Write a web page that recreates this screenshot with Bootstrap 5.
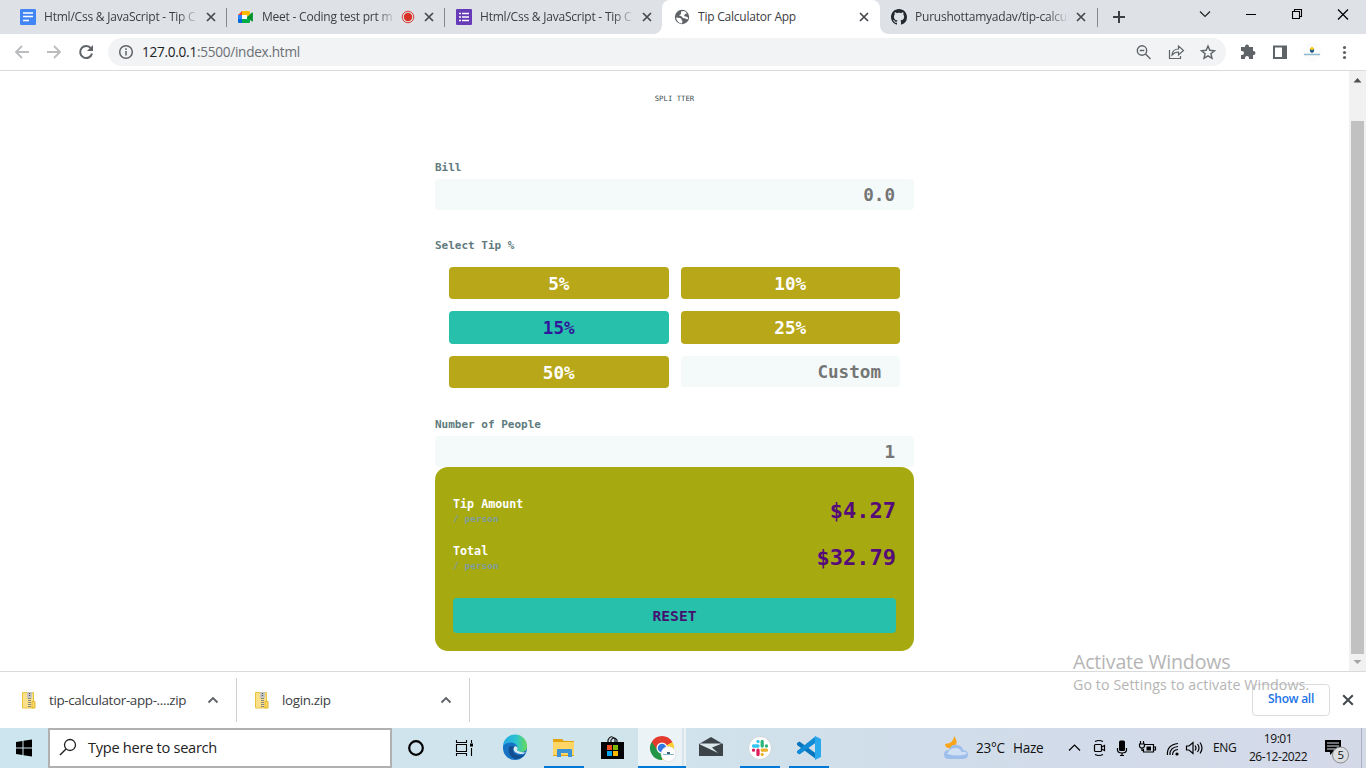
<!DOCTYPE html>
<html lang="en">
<head>
<meta charset="utf-8">
<title>Tip Calculator App</title>
<link href="https://cdn.jsdelivr.net/npm/bootstrap@5.3.0/dist/css/bootstrap.min.css" rel="stylesheet">
<style>
body{width:1366px;height:768px;overflow:hidden;font-family:"Open Sans","Noto Sans",sans-serif;font-size:12px;color:#3c4043;background:#fff}
svg{display:block;flex:none}
.tabstrip{height:34px;background:#dee1e6;padding-left:8px}
.tab{width:218px;height:34px;padding-left:12px;position:relative}
.tab .ttl{width:155px;margin-left:8px;overflow:hidden;white-space:nowrap;letter-spacing:-.22px;line-height:20px}
.tab .fade-end{-webkit-mask-image:linear-gradient(90deg,#000 86%,transparent);mask-image:linear-gradient(90deg,#000 86%,transparent)}
.tab .cls{margin-left:7px}
.tab.sep::after{content:"";position:absolute;right:-1px;top:8px;height:19px;width:1px;background:#85888c}
.tab.on{background:#fff;border-radius:8px 8px 0 0}
.tab.on .cls{margin-left:6px}
.tab.on::before,.tab.on::after{content:"";position:absolute;bottom:0;width:8px;height:8px}
.tab.on::before{left:-8px;background:radial-gradient(circle at 0 0,transparent 7.5px,#fff 8px)}
.tab.on::after{right:-8px;background:radial-gradient(circle at 100% 0,transparent 7.5px,#fff 8px)}
.toolbar{height:37px;border-bottom:1px solid #d9dadb;padding-left:12px}
.omni{width:1118px;height:28px;border-radius:14px;background:#f1f3f4;padding:0 8px 0 10px;margin-left:14px}
.url{font-size:13.6px;letter-spacing:-.27px;color:#6b6f74;margin-left:8px}
.url b{font-weight:400;color:#202124}
.viewport{height:600px}
.sbar{width:17px;background:#f1f1f1}
.thumb{width:13px;height:533px;background:#c1c1c1}
.calc{width:479px;font-family:"DejaVu Sans Mono",monospace;font-weight:700}
.logo{font-size:7.3px;font-weight:400;line-height:10px;padding-top:23px;color:#3a4a50}
.lbl{font-size:11px;line-height:16px;color:#5e7a7d}
.inp{height:31px;border-radius:4px;background:#f4fafa;color:#757575;font-size:17.6px;line-height:32px;text-align:right;padding-right:19px}
.tips{display:grid;grid-template-columns:1fr 1fr;gap:12px;padding:0 14px}
.tipb{height:32.5px;border:0;border-radius:4px;background:#b8a718;color:#fff;font-size:17.6px;line-height:34px;text-align:center;padding:0;font-weight:700}
.tipb.sel{background:#26c0ab;color:#31159b}
.result{height:184px;background:#a6a90f;border-radius:13px;padding:28px 18px 18px}
.rl{font-size:11.7px;line-height:18px;color:#fff}
.rs{font-size:9.5px;line-height:11px;color:#7f9c9f}
.amt{font-size:22px;line-height:32px;color:#550b78}
.reset{height:35px;border:0;border-radius:4px;background:#26c0ab;color:#44116f;font-size:14.7px;font-weight:700;line-height:36px;padding:0}
.shelf{height:57px;border-top:1px solid #d9dadb}
.dl{height:44px;border-right:1px solid #cfd0d2;font-size:13.4px;letter-spacing:-.34px;color:#3c4043}
.showall{width:78px;height:32px;border:1px solid #dadce0;border-radius:4px;color:#1a73e8;background:#fff;font-size:12px;font-weight:600;letter-spacing:-.25px;line-height:28px;padding:0 0 2px}
.water{position:absolute;left:1073px;top:649px;color:#b5b5b5;white-space:nowrap}
.water .w1{font-size:19.6px;line-height:26px;letter-spacing:-.22px}
.water .w2{font-size:14.2px;line-height:20px;letter-spacing:.11px}
.taskbar{height:40px;background:linear-gradient(90deg,#cce5ee,#d0e4ec 45%,#d1ddea 68%,#d4d9e8);color:#111}
.search{width:344px;height:40px;border:2px solid #b0b0b0;background:#fff;font-size:14.6px;letter-spacing:-.28px;color:#222}
.run{box-shadow:inset 0 -2px #0078d7}
.tray{letter-spacing:-.3px;white-space:nowrap}
</style>
</head>
<body class="d-flex flex-column m-0">
<svg width="0" height="0" style="position:absolute">
<symbol id="x" viewBox="0 0 10 10"><path d="M1 1l8 8M9 1L1 9" stroke="#45494d" stroke-width="1.7"/></symbol>
<symbol id="up" viewBox="0 0 12 8"><path d="M1.500 6.500L6 2l4.500 4.500" fill="none" stroke="#5f6368" stroke-width="1.900"/></symbol>
<symbol id="zip" viewBox="0 0 14 17"><path d="M.5.500h11v15.500H.5z" fill="#fbe08a" stroke="#e8c33d"/><path d="M10 9.500h3v6.500h-3z" fill="#f8d866" stroke="#e3b92f"/><path d="M5 0h5v5l-1 2H6L5 5z" fill="#c4c4c4"/><path d="M7.500 1v3" stroke="#555" stroke-width="1.200" stroke-dasharray="1 1"/><path d="M7.500 6v10" stroke="#858585" stroke-width="3" stroke-dasharray="1 1"/></symbol>
</svg>

<div class="tabstrip d-flex">
  <div class="tab sep d-flex align-items-center">
    <svg width="16" height="16"><rect width="16" height="16" rx="1" fill="#4285f4"/><path d="M3 4h10M3 7.500h10M3 11.500h6" stroke="#fff" stroke-width="1.700"/></svg>
    <span class="ttl fade-end">Html/Css &amp; JavaScript - Tip C</span><svg class="cls" width="10" height="10"><use href="#x"/></svg>
  </div>
  <div class="tab sep d-flex align-items-center">
    <svg width="16" height="16" viewBox="0 0 16 16"><path d="M4 2h7v4H4z" fill="#ffba00"/><path d="M4 2v4H0z" fill="#ea4335"/><path d="M0 6h4v4H0z" fill="#2684fc"/><path d="M0 10h4v4H1q-1 0-1-1z" fill="#0066da"/><path d="M4 10h5V8l3-1v6q0 1-1 1H4z" fill="#00ac47"/><path d="M4 6h5v4H4z" fill="#fff"/><path d="M11 2q1 0 1 1v2.500L9 8V2z" fill="#ffba00"/><path d="M9 8l5-4.500q.9-.3.900.400v8.200q0 .7-.9.300z" fill="#00932d"/></svg>
    <span class="ttl fade-end" style="width:134px">Meet - Coding test prt m</span>
    <svg width="14" height="14" style="margin-left:5px"><circle cx="7" cy="7" r="5.800" fill="none" stroke="#d93025" stroke-width=".9"/><circle cx="7" cy="7" r="4.200" fill="#d93025"/></svg><svg width="10" height="10" style="margin-left:9px"><use href="#x"/></svg>
  </div>
  <div class="tab d-flex align-items-center">
    <svg width="16" height="16"><rect width="16" height="16" rx="1" fill="#673ab7"/><path d="M3 4.500h2M3 8h2M3 11.500h2M6 4.500h7M6 8h7M6 11.500h7" stroke="#fff" stroke-width="1.700"/></svg>
    <span class="ttl fade-end">Html/Css &amp; JavaScript - Tip C</span><svg class="cls" width="10" height="10"><use href="#x"/></svg>
  </div>
  <div class="tab on d-flex align-items-center">
    <svg width="16" height="16" viewBox="0 0 16 16"><circle cx="8" cy="8" r="7.200" fill="#5f6368"/><path d="M2 8.500l4 .5q2 .5 1.500 2l1 1-.5 2.500Q3 14 2 8.500zM7 2.500q4-1.500 6 2l-2 .5-1 2 3.500 1 .7 2q-1.500.500-3-.5L9 9 7 7l-2-.5 2-1.500z" fill="#fff"/></svg>
    <span class="ttl">Tip Calculator App</span><svg class="cls" width="10" height="10"><use href="#x"/></svg>
  </div>
  <div class="tab sep d-flex align-items-center" style="width:217px;padding-left:11px">
    <svg width="16" height="16" viewBox="0 0 16 16"><path fill="#24292f" d="M8 0C3.580 0 0 3.580 0 8c0 3.540 2.290 6.530 5.470 7.590.4.070.55-.17.550-.38 0-.19-.01-.82-.01-1.490-2.010.370-2.530-.49-2.690-.94-.09-.23-.48-.94-.82-1.130-.28-.15-.68-.52-.01-.53.630-.01 1.080.580 1.230.820.720 1.210 1.870.870 2.330.660.070-.52.280-.87.510-1.070-1.780-.2-3.640-.89-3.640-3.950 0-.87.310-1.590.820-2.150-.08-.2-.36-1.020.080-2.120 0 0 .67-.21 2.200.820.640-.18 1.320-.27 2-.27s1.360.090 2 .27c1.530-1.040 2.200-.82 2.200-.82.440 1.100.160 1.920.080 2.120.510.560.820 1.270.820 2.150 0 3.070-1.870 3.750-3.650 3.950.290.250.540.730.540 1.480 0 1.070-.01 1.930-.01 2.200 0 .21.150.460.550.380A8 8 0 0 0 16 8c0-4.420-3.580-8-8-8z"/></svg>
    <span class="ttl fade-end" style="width:154px">Purushottamyadav/tip-calcul</span><svg class="cls" width="10" height="10"><use href="#x"/></svg>
  </div>
  <svg width="269" height="34"><path d="M22 11v12M16 17h12" stroke="#3c4043" stroke-width="2"/><path d="M103 11.500l5 5 5-5" fill="none" stroke="#222" stroke-width="1.200"/><path d="M149 14.500h10" stroke="#000"/><path d="M195.500 11.500h7v7h-7zM197.500 11.500v-2h7v7h-2" fill="none" stroke="#000" stroke-width="1.100"/><path d="M241 9.500l10 10m0-10l-10 10" stroke="#000" stroke-width="1.200"/></svg>
</div>

<div class="toolbar d-flex align-items-center">
  <svg width="82" height="36"><g fill="none" stroke-width="1.800"><path d="M17 18H4m6-6l-6 6 6 6M35 18h13m-6-6l6 6-6 6" stroke="#babcbe"/><path d="M79 14.500A6 6 0 1 0 80 19.500" stroke="#5f6368" stroke-width="2"/></g><path d="M81 11v6h-6z" fill="#5f6368"/></svg>
  <div class="omni d-flex align-items-center">
    <svg width="16" height="16"><circle cx="8" cy="8" r="6.300" fill="none" stroke="#5f6368" stroke-width="1.500"/><path d="M8 7v4.500M8 4.300v1.600" stroke="#5f6368" stroke-width="1.500"/></svg>
    <span class="url"><b>127.0.0.1</b>:5500/index.html</span>
    <svg class="ms-auto" width="82" height="20" viewBox="0 0 82 20"><g fill="none" stroke="#5f6368" stroke-width="1.400"><circle cx="6" cy="8.500" r="4.700"/><path d="M9.500 12l5 5M3.700 8.500h4.600"/><path d="M33.500 8v8.500h11V14M36 13q.5-6 6.500-6V4l5 4.500-5 4.500V10q-4 0-6.500 3z" stroke-width="1.200"/><path d="M72 4l1.800 4.300 4.700.4-3.600 3 1.100 4.600-4-2.500-4 2.500 1.100-4.600-3.600-3 4.700-.4z"/></g></svg>
  </div>
  <svg width="140" height="36"><path d="M15 13h4v-.5a2 2 0 0 1 4 0v.5h4v4h.5a2 2 0 0 1 0 4H27v4h-4v-1a2 2 0 0 0-4 0v1h-4v-4h1a2 2 0 0 0 0-4h-1z" fill="#5f6368"/><path d="M47 11.500h14V25H47zM49 13.500V23h7v-9.500z" fill="#5f6368" fill-rule="evenodd"/><circle cx="86" cy="18" r="10" fill="#fcfcfc"/><path d="M84 14h4v2.500h-4z" fill="#f6c819"/><path d="M83.700 15.500h4.600q0 3-2.300 3.500-2.300-.5-2.300-3.500z" fill="#1f5d88"/><path d="M85 13h2v3h-2z" fill="#f6c819"/><path d="M78 20.500h16" stroke="#8fb8cb" stroke-width="1.500"/><g fill="#5f6368"><circle cx="118.500" cy="13.500" r="1.600"/><circle cx="118.500" cy="18.500" r="1.600"/><circle cx="118.500" cy="23.500" r="1.600"/></g></svg>
</div>

<div class="viewport d-flex">
  <main class="flex-grow-1 d-flex justify-content-center">
    <div class="calc">
      <div class="logo text-center">SPLI TTER</div>
      <div class="lbl" style="margin-top:56px">Bill</div>
      <div class="inp" style="margin-top:3px">0.0</div>
      <div class="lbl" style="margin-top:28px">Select Tip %</div>
      <div class="tips" style="margin-top:12.700px">
        <button class="tipb">5%</button><button class="tipb">10%</button>
        <button class="tipb sel">15%</button><button class="tipb">25%</button>
        <button class="tipb">50%</button><div class="inp align-self-center">Custom</div>
      </div>
      <div class="lbl" style="margin-top:28.800px">Number of People</div>
      <div class="inp" style="margin-top:3px">1</div>
      <div class="result d-flex flex-column">
        <div class="d-flex justify-content-between" style="height:47px"><div><div class="rl">Tip Amount</div><div class="rs">/ person</div></div><div class="amt">$4.27</div></div>
        <div class="d-flex justify-content-between"><div><div class="rl">Total</div><div class="rs">/ person</div></div><div class="amt">$32.79</div></div>
        <button class="reset w-100 mt-auto">RESET</button>
      </div>
    </div>
  </main>
  <div class="sbar d-flex flex-column align-items-center">
    <svg width="17" height="50"><path d="M4.500 11.500h8l-4-4.500z" fill="#505050"/></svg>
    <div class="thumb"></div>
    <svg width="17" height="17"><path d="M4.500 6h8l-4 4z" fill="#a3a3a3"/></svg>
  </div>
</div>

<div class="shelf d-flex align-items-center">
  <div class="dl d-flex align-items-center" style="width:237px;padding-left:22px"><svg width="14" height="17"><use href="#zip"/></svg><span style="margin-left:13px">tip-calculator-app-....zip</span><svg class="ms-auto" width="12" height="8" style="margin-right:17px"><use href="#up"/></svg></div>
  <div class="dl d-flex align-items-center" style="width:233px;padding-left:18px"><svg width="14" height="17"><use href="#zip"/></svg><span style="margin-left:13px">login.zip</span><svg class="ms-auto" width="12" height="8" style="margin-right:17px"><use href="#up"/></svg></div>
  <button class="showall ms-auto">Show all</button>
  <svg width="12" height="12" style="margin:0 12px"><use href="#x"/></svg>
</div>

<div class="taskbar d-flex align-items-center">
  <svg width="48" height="40"><path d="M16 14l6.500-1v6.500H16zM23.500 12.800l8.500-1.300v8h-8.500zM16 20.500h6.500V27L16 26zM23.500 20.500H32v8l-8.500-1.300z" fill="#000"/></svg>
  <div class="search d-flex align-items-center"><svg width="38" height="36"><circle cx="20" cy="15" r="5.500" fill="none" stroke="#222" stroke-width="1.300"/><path d="M16 19l-6 6" stroke="#222" stroke-width="1.400"/></svg>Type here to search</div>
  <svg width="98" height="40"><circle cx="24" cy="20" r="6.800" fill="none" stroke="#000" stroke-width="2.200"/><path d="M64.500 12v2.500h10V12M64.500 16.500h10v7h-10zM64.500 28v-2.500h10V28M79.500 12v3m0 5v8" fill="none" stroke="#000" stroke-width="1.100"/><rect x="78" y="15.500" width="3" height="3"/></svg>
  <svg width="54" height="40" viewBox="0 0 54 40"><defs><linearGradient id="eg"><stop stop-color="#1fa9e6"/><stop offset=".55" stop-color="#2cc3d0"/><stop offset="1" stop-color="#68db55"/></linearGradient></defs><circle cx="25" cy="20" r="12" fill="#1672c4"/><path d="M13 18a12 12 0 0 1 24 1q0 5-6 5-5 0-5-2 2-2 1-4-2-4-7-3.500-5 .5-7 3.500z" fill="url(#eg)"/><path d="M19 19q-2 9 6 12 6 0 10-4.500-6 2-10-.5-4-3 0-7-4-2-6 0z" fill="#134e91"/><path d="M25 18q-3 3 0 6 4 3 9 1.500l2-1q-5 .5-9-2 1-2 0-3.500z" fill="#dcebf1"/></svg>
  <svg class="run" width="40" height="40"><path d="M9 11h9l2 2h10v15H9z" fill="#e2a30c"/><path d="M9 14h21v13H9z" fill="#ffd566"/><path d="M13 29v-7q0-1 1-1h13q1 0 1 1v7h-4v-4h-7v4z" fill="#3b93d6"/></svg>
  <svg width="54" height="40"><path d="M24 14v-2q3-6 7-1v3" fill="none" stroke="#111" stroke-width="1.200"/><path d="M27 14v-2q3-4 6 0v2" fill="none" stroke="#111" stroke-width="1.200"/><path d="M17 14h23v17H17z" fill="#000"/><path d="M23 17h5v5h-5z" fill="#f25022"/><path d="M29 17h5v5h-5z" fill="#7fba00"/><path d="M23 23h5v5h-5z" fill="#00a4ef"/><path d="M29 23h5v5h-5z" fill="#ffb900"/></svg>
  <svg class="run" width="48" height="40" style="background:#ebf3f7"><path d="M24 20L13.600 14a12 12 0 0 1 20.800 0z" fill="#e33b2e"/><path d="M24 20l10.400-6A12 12 0 0 1 24 32z" fill="#fdcf2b"/><path d="M24 20v12A12 12 0 0 1 13.600 14z" fill="#229547"/><path d="M13.600 14h20.800l-6 3-9 5z" fill="#e33b2e"/><circle cx="24" cy="20" r="5.500" fill="#fff"/><circle cx="24" cy="20" r="4.300" fill="#3278e5"/><circle cx="30.500" cy="26" r="7.500" fill="#fff" stroke="#d3d3d3" stroke-width=".6"/><path d="M25 26.500h11" stroke="#83b2c9"/><path d="M29 24h3v2h-3z" fill="#376578"/><path d="M45 0v38" stroke="#c4d5de"/></svg>
  <svg width="54" height="40"><path d="M13 16l12-7 12 7v12H13z" fill="#3c444a"/><path d="M14 15.500h22l-10 4 6 5.500-18-8.500z" fill="#dbe6ed"/></svg>
  <svg class="run" width="40" height="40"><circle cx="20" cy="20" r="11.500" fill="#fff" stroke="#d0d4d8"/><g stroke-linecap="round" stroke-width="3.300"><path d="M18 13.500v.1M13.500 18h4.500" stroke="#36c5f0"/><path d="M22.200 13.500v4.500M26.500 18h-.1" stroke="#2eb67d"/><path d="M22.200 22.200h4.300M22.200 26.500v-.1" stroke="#ecb22e"/><path d="M18 22.200v4.300M13.500 22.200h.1" stroke="#e01e5a"/></g></svg>
  <svg width="9" height="40"></svg>
  <svg class="run" width="40" height="40"><path d="M8 15l2.500-1.500L27 25.500V31L8 17z" fill="#0875bf"/><path d="M8 25l2.500 1.500L27 14.500V8L8 23z" fill="#128bd6"/><path d="M26 8l6 3v18l-6 3z" fill="#29a8ee"/></svg>
  <svg width="26" height="40" class="ms-auto"><path d="M11 8q0 7-9 8 0 5 7 4 8-4 2-12z" fill="#f9a51c"/><path d="M6 31q-5 0-5-4.500t5-4.500q2-6 8-5 5 .5 6 5 5 .5 5 4.500T20 31z" fill="#9dbdea"/><path d="M4 26q3-7 10-6 4 1 4.500 4 5-1 5.500 2-9 3-20 0z" fill="#cfdff5"/></svg>
  <span class="tray" style="font-size:13.600px;margin-left:7px;width:90px;word-spacing:5px">23°C Haze</span>
  <svg width="147" height="40"><g fill="none" stroke="#000" stroke-width="1.200"><path d="M3 22.500l5.500-5.500 5.500 5.500"/><rect x="28.500" y="16.500" width="7" height="7" rx="1"/><path d="M35.500 19l3-1.500v5l-3-1.500M29 13.500q4-2 8 0M29 26.500q4 2 8 0"/><path d="M51.500 20v2q0 3 4.500 3t4.500-3v-2M56 25v3M54 27.500h4"/><path d="M79 16.500h8.500v7.500h-10V21M87.500 19h2v3h-2M73.500 16v1.500q0 2.500 2.500 2.500t2.500-2.500V16M73 16h6M74.500 13v3M77.500 13v3M76 20v2.500h2"/><path d="M101.500 27q-1-10 10.500-11.500M104 27q-.5-7.500 8-8.500M106.500 27q0-5 5.500-5.500"/><path d="M120.500 18h2.500l4-3.500v11l-4-3.500h-2.500zM129 17.500q2 2.500 0 5M131.500 16q3 4 0 8M134 14.500q4 5.500 0 11"/></g><rect x="53" y="12.500" width="6" height="10.500" rx="1.500"/><path d="M80.500 18.500h4.500v4h-4.500z"/><circle cx="111" cy="26" r="1.600"/></svg>
  <span class="tray" style="font-size:12px;width:33px">ENG</span>
  <div class="tray text-center" style="font-size:12px;line-height:18px;width:64px;letter-spacing:-.45px;margin-right:14px">19:01<br>26-12-2022</div>
  <svg width="42" height="40"><path d="M1 12h16v12H9l-3 3v-3H1z" fill="#000"/><path d="M3 15h12M3 18h12M3 21h8" stroke="#dce2ea"/><circle cx="16.500" cy="27" r="8" fill="#dcdfe2" stroke="#888"/><text x="13.500" y="31" font-size="11.500" fill="#111">5</text><path d="M37.500 0v40" stroke="#aab1c0"/></svg>
</div>
<div class="water"><div class="w1">Activate Windows</div><div class="w2">Go to Settings to activate Windows.</div></div>
<script src="https://cdn.jsdelivr.net/npm/bootstrap@5.3.0/dist/js/bootstrap.bundle.min.js"></script>
</body>
</html>
